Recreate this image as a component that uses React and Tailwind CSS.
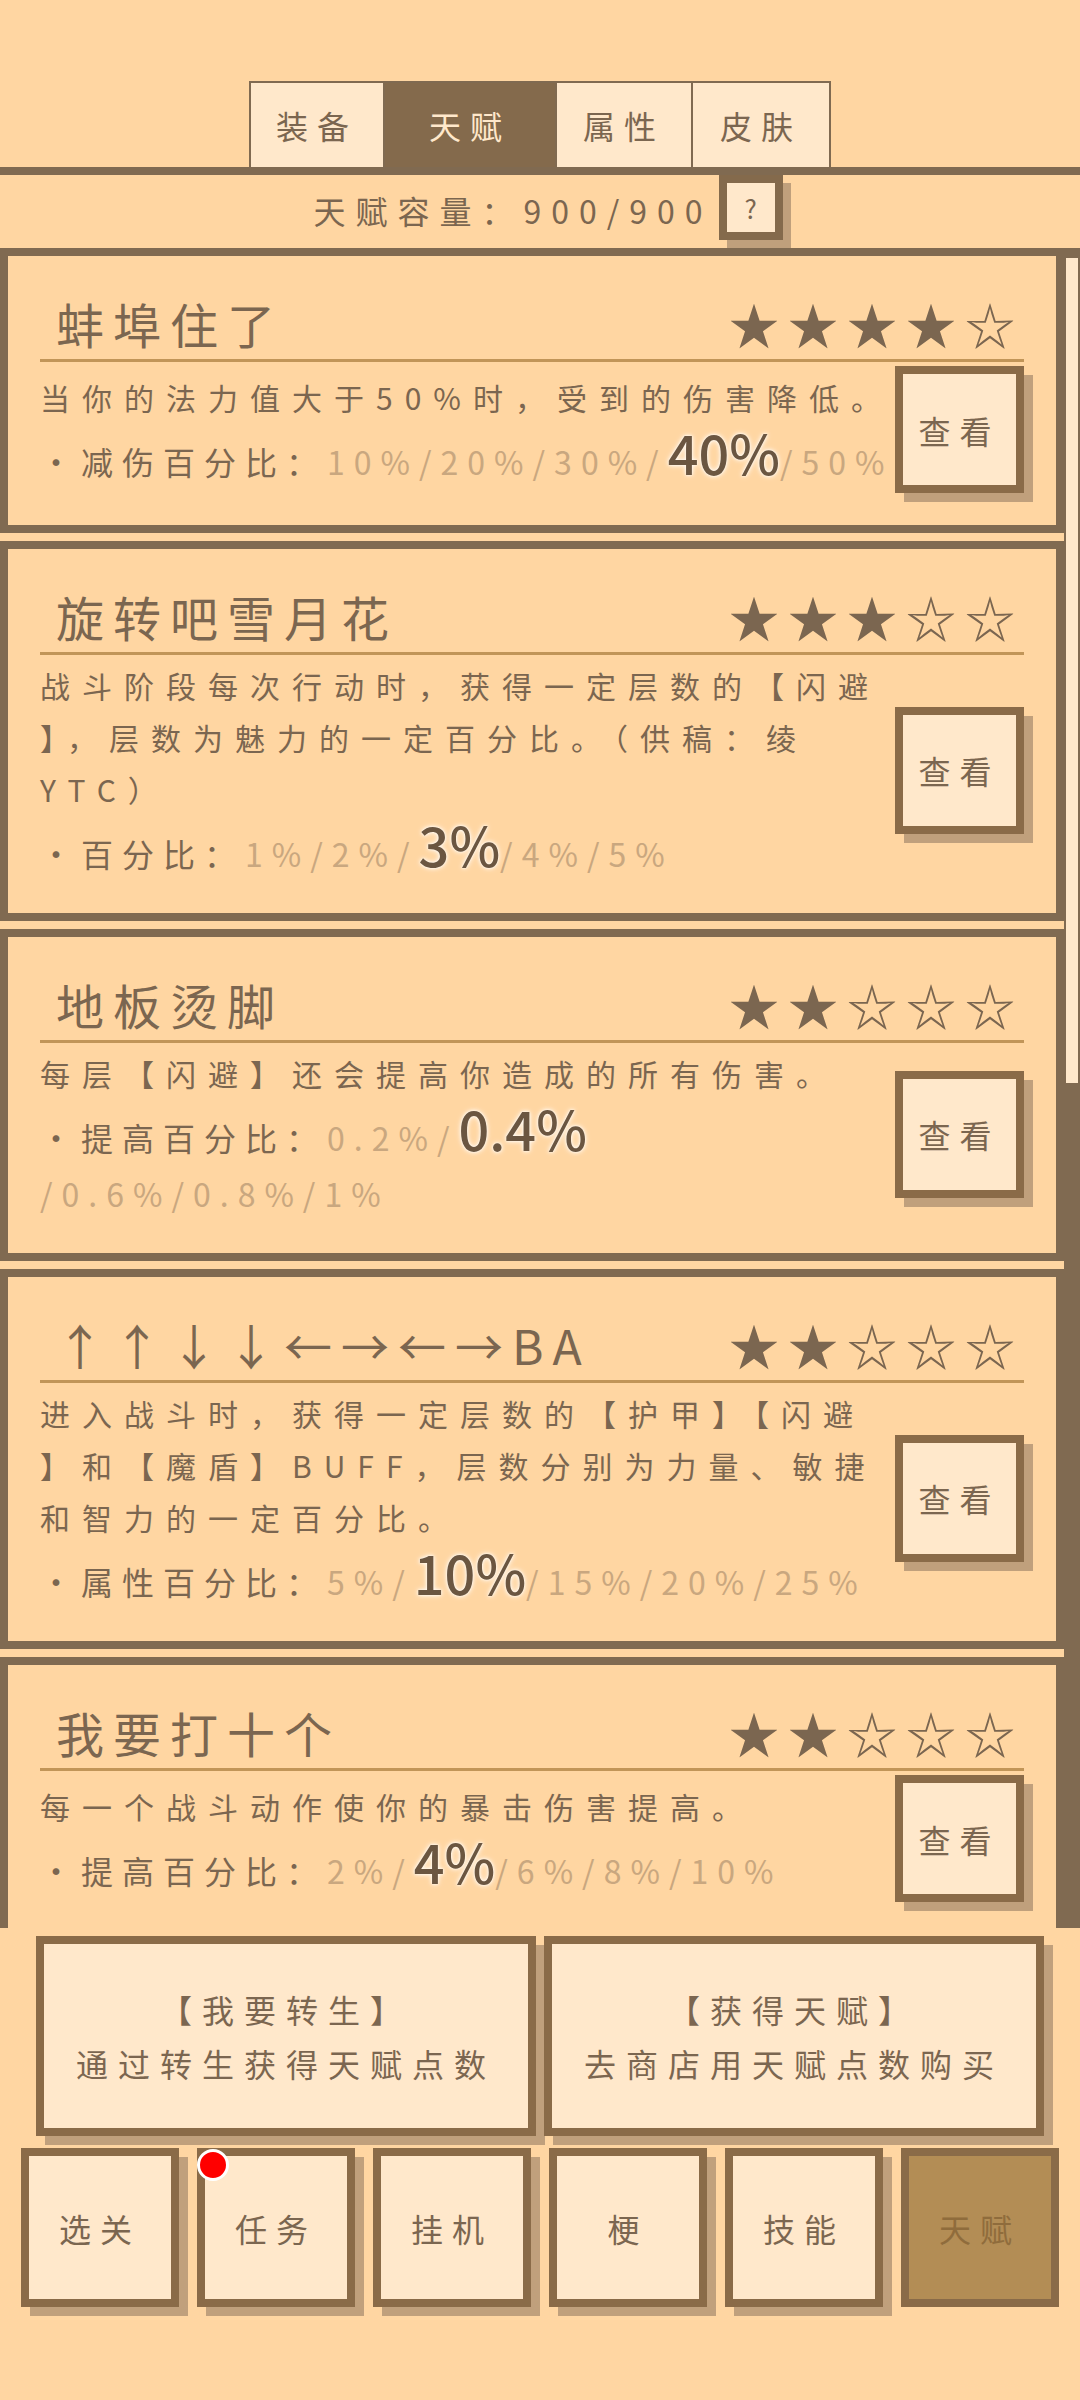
import React from "react";

const talents = [
  {
    name: "蚌埠住了",
    stars: 4,
    desc: ["当你的法力值大于50%时，受到的伤害降低。"],
    label: "减伤百分比",
    values: ["10%", "20%", "30%", "40%", "50%"],
    active: 3,
  },
  {
    name: "旋转吧雪月花",
    stars: 3,
    desc: [
      "战斗阶段每次行动时，获得一定层数的【闪避",
      "】，层数为魅力的一定百分比。（供稿：绫",
      "YTC）",
    ],
    label: "百分比",
    values: ["1%", "2%", "3%", "4%", "5%"],
    active: 2,
  },
  {
    name: "地板烫脚",
    stars: 2,
    desc: ["每层【闪避】还会提高你造成的所有伤害。"],
    label: "提高百分比",
    values: ["0.2%", "0.4%", "0.6%", "0.8%", "1%"],
    active: 1,
    wrap: true,
  },
  {
    name: "↑↑↓↓←→←→BA",
    stars: 2,
    desc: [
      "进入战斗时，获得一定层数的【护甲】【闪避",
      "】和【魔盾】BUFF，层数分别为力量、敏捷",
      "和智力的一定百分比。",
    ],
    label: "属性百分比",
    values: ["5%", "10%", "15%", "20%", "25%"],
    active: 1,
  },
  {
    name: "我要打十个",
    stars: 2,
    desc: ["每一个战斗动作使你的暴击伤害提高。"],
    label: "提高百分比",
    values: ["2%", "4%", "6%", "8%", "10%"],
    active: 1,
  },
];

const tabs = [
  { label: "装备", width: "w-[136px]" },
  { label: "天赋", width: "w-[172px]", active: true },
  { label: "属性", width: "w-[136px]" },
  { label: "皮肤", width: "w-[138px]" },
];

const navItems = ["选关", "任务", "挂机", "梗", "技能", "天赋"];

function TalentCard({ talent }) {
  const before = talent.values.slice(0, talent.active).map((v) => v + "/").join("");
  const current = talent.values[talent.active];
  const after = talent.values.slice(talent.active + 1).map((v) => "/" + v).join("");

  return (
    <div className="shrink-0 border-8 border-[#806a51] px-[32px] pt-[31px] pb-[32px]">
      {/* name + rarity */}
      <div className="flex items-center justify-between border-b-[3px] border-[#c19558] text-[48px] leading-[72px] tracking-[9px]">
        <span className="pl-4 whitespace-nowrap">{talent.name}</span>
        <span className="whitespace-nowrap text-[50px]">
          {"★".repeat(talent.stars) + "☆".repeat(5 - talent.stars)}
        </span>
      </div>

      <div className="mt-[4px] flex items-center gap-4">
        <div className="min-w-0 flex-1">
          {talent.desc.map((line, i) => (
            <div key={i} className="whitespace-nowrap text-[30px] leading-[52px] tracking-[12px]">
              {line}
            </div>
          ))}
          <div className="whitespace-nowrap text-[32px] leading-[56px] tracking-[9px]">
            ・{talent.label}：
            <span className="text-[#c9a77f]">{before}</span>
            <span className="inline-block text-[54px] font-medium leading-[58px] tracking-normal text-[#6b5641] [text-shadow:0_0_2px_#fffaf2,0_0_4px_#fffaf2,0_0_6px_#ffeedb]">
              {current}
            </span>
            {talent.wrap && <br />}
            <span className="text-[#c9a77f]">{after}</span>
          </div>
        </div>

        <button className="flex h-[127px] w-[129px] shrink-0 items-center justify-center border-8 border-[#8a6b48] bg-[#ffe8cb] text-[32px] tracking-[9px] text-[#7b6650] shadow-[9px_9px_0_#c0a07c]">
          查看
        </button>
      </div>
    </div>
  );
}

export default function App() {
  return (
    <div className="h-[2400px] w-[1080px] overflow-hidden bg-[#ffd6a2] font-['Noto_Sans_CJK_SC','Noto_Sans',sans-serif] text-[#7b6650]">
      {/* Tabs */}
      <div className="flex justify-center pt-[81px]">
        {tabs.map((tab, i) => (
          <div
            key={tab.label}
            className={`flex h-[86px] items-center justify-center border-2 border-b-0 border-[#806a51] text-[32px] tracking-[9px] ${tab.width} ${
              i > 0 ? "border-l-0" : ""
            } ${tab.active ? "bg-[#846a4c] text-[#ffe8cb]" : "bg-[#ffe8cb]"}`}
          >
            {tab.label}
          </div>
        ))}
      </div>
      <div className="h-[8px] bg-[#806a51]" />

      {/* Capacity */}
      <div className="flex h-[73px] items-start justify-center pl-[16px]">
        <span className="mt-[3px] text-[32px] leading-[64px] tracking-[10px]">天赋容量：900/900</span>
        <button className="ml-[6px] flex h-[65px] w-[64px] items-center justify-center border-8 border-[#846a4c] bg-[#ffe8cb] text-[26px] text-[#7b6650] shadow-[8px_8px_0_#c0a07c]">
          ?
        </button>
      </div>

      {/* Talent list */}
      <div className="flex h-[1680px] overflow-hidden">
        <div className="flex w-[1064px] flex-col gap-[8px] overflow-hidden">
          {talents.map((t) => (
            <TalentCard key={t.name} talent={t} />
          ))}
        </div>
        <div className="w-[16px] bg-[#806a51] px-[2px] pt-[10px]">
          <div className="h-[825px] bg-[#ffe8cb]" />
        </div>
      </div>

      {/* Rebirth / shop */}
      <div className="mt-[8px] flex gap-[8px] pl-[36px]">
        <button className="flex h-[200px] w-[500px] flex-col items-center justify-center border-8 border-[#8a6b48] bg-[#ffe8cb] text-[32px] leading-[54px] tracking-[10px] text-[#7b6650] shadow-[9px_9px_0_#c0a07c]">
          <span>【我要转生】</span>
          <span>通过转生获得天赋点数</span>
        </button>
        <button className="flex h-[200px] w-[500px] flex-col items-center justify-center border-8 border-[#8a6b48] bg-[#ffe8cb] text-[32px] leading-[54px] tracking-[10px] text-[#7b6650] shadow-[9px_9px_0_#c0a07c]">
          <span>【获得天赋】</span>
          <span>去商店用天赋点数购买</span>
        </button>
      </div>

      {/* Bottom nav */}
      <div className="mt-[12px] flex justify-between px-[21px]">
        {navItems.map((item, i) => {
          const active = i === navItems.length - 1;
          return (
            <button
              key={item}
              className={`relative flex h-[159px] w-[158px] items-center justify-center border-8 border-[#8a6b48] text-[32px] tracking-[9px] ${
                active
                  ? "bg-[#b38d55] text-[#8f6c3c]"
                  : "bg-[#ffe8cb] text-[#7b6650] shadow-[9px_9px_0_#c0a07c]"
              }`}
            >
              {item}
              {item === "任务" && (
                <span className="absolute -left-[8px] -top-[7px] h-[32px] w-[32px] rounded-full border-[3px] border-white bg-[#ff0000]" />
              )}
            </button>
          );
        })}
      </div>
    </div>
  );
}
